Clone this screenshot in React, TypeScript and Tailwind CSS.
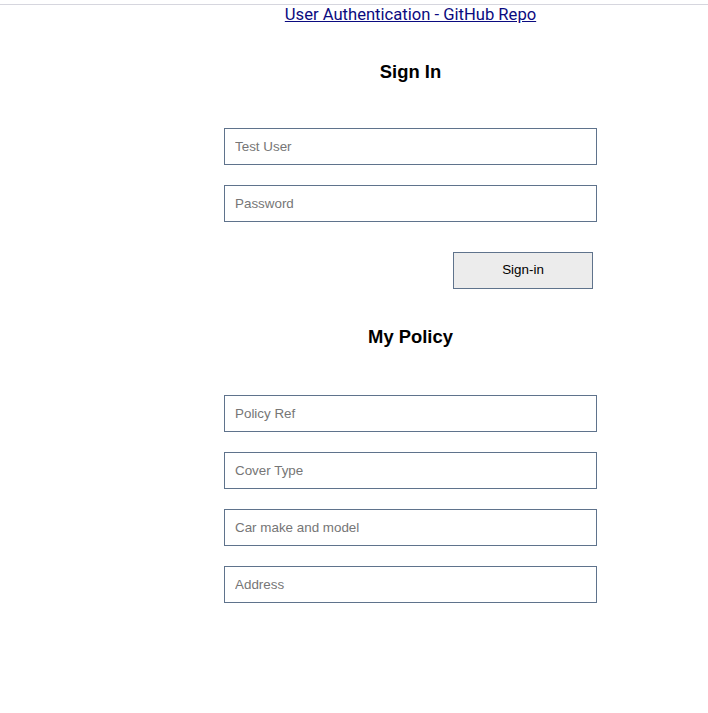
import React from "react";

const inputCls =
  "block w-[373px] h-[37px] border border-[#5f738c] bg-white px-[10px] text-[13.4px] text-black placeholder:text-[#767676] outline-none";

export default function App() {
  return (
    <div className="min-h-[713px] bg-white" style={{ fontFamily: '"Liberation Sans", Arial, sans-serif' }}>
      <div className="pt-[4px]">
        <div className="h-px bg-[#d6d6de]" />
      </div>
      <div className="ml-[224px] w-[373px] flex flex-col">
        <div className="text-center leading-[19px]">
          <a
            href="#"
            className="text-[16.6px] text-[#0b0b80] underline"
            style={{ fontFamily: "Roboto, sans-serif" }}
          >
            User Authentication - GitHub Repo
          </a>
        </div>
        <h2 className="mt-[36px] text-center text-[18.4px] leading-[24px] font-bold text-black">Sign In</h2>
        <input className={`${inputCls} mt-[44px]`} placeholder="Test User" />
        <input className={`${inputCls} mt-[20px]`} placeholder="Password" type="password" />
        <div className="mt-[30px] flex justify-end pr-[4px]">
          <button className="w-[140px] h-[37px] border border-[#5f738c] bg-[#ececec] text-[13.4px] text-black">
            Sign-in
          </button>
        </div>
        <h2 className="mt-[36px] text-center text-[18.4px] leading-[24px] font-bold text-black">My Policy</h2>
        <input className={`${inputCls} mt-[46px]`} placeholder="Policy Ref" />
        <input className={`${inputCls} mt-[20px]`} placeholder="Cover Type" />
        <input className={`${inputCls} mt-[20px]`} placeholder="Car make and model" />
        <input className={`${inputCls} mt-[20px]`} placeholder="Address" />
      </div>
    </div>
  );
}
